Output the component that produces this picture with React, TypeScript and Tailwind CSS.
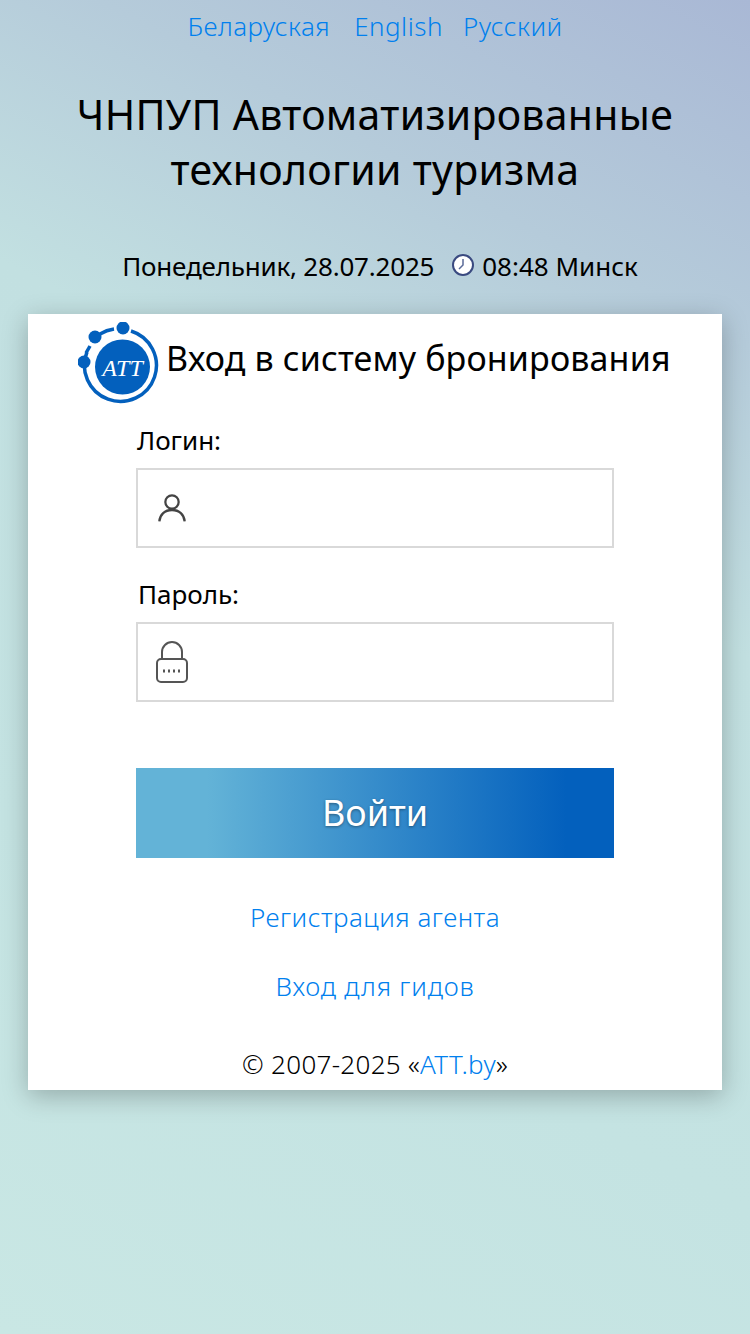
export default function App() {
  return (
    <div className="min-h-[1334px] bg-[linear-gradient(208deg,#a9b8d5_0%,#b5cbda_20%,#c2e0e1_38%,#c4e3e2_70%,#c9e7e4_100%)] font-['Noto_Sans',sans-serif]">
      <div className="flex flex-col items-center">
        <div className="flex h-[52px] items-center text-[26px] text-[#0080ee] font-light tracking-[0.5px]">
          <span>Беларуская</span>
          <span className="ml-[24px]">English</span>
          <span className="ml-[20px]">Русский</span>
        </div>
        <h1 className="mt-[35px] text-center text-[41px] leading-[55px] tracking-[0.3px] text-black">
          ЧНПУП Автоматизированные<br />технологии туризма
        </h1>
        <div className="mt-[49px] pl-[10px] flex items-center text-[26px] text-black h-[40px]">
          <span className="tracking-[-0.2px]">Понедельник, 28.07.2025</span>
          <svg className="ml-[17px] mr-[7px]" width="24" height="24" viewBox="0 0 24 24">
            <circle cx="12" cy="11" r="10" fill="#fff" stroke="#3a4a80" strokeWidth="2" />
            <path d="M12 5v6l-4 4" fill="none" stroke="#5a6a98" strokeWidth="1.500" />
          </svg>
          <span>08:48 Минск</span>
        </div>
        <div className="mt-[28px] w-[694px] h-[776px] bg-white shadow-[0_6px_24px_rgba(0,0,0,0.25)] flex flex-col items-center">
          <div className="flex items-center h-[89px] w-full pl-[50px]">
            <svg width="84" height="84" viewBox="0 0 84 84" className="mt-[11px]">
              <path d="M9 30a36 36 0 1 0 44-21" fill="none" stroke="#0360bd" strokeWidth="3.500" />
              <path d="M22 12a36 36 0 0 1 14-5" fill="none" stroke="#0360bd" strokeWidth="3.500" />
              <path d="M8 31l4-7" fill="none" stroke="#0360bd" strokeWidth="3.500" />
              <circle cx="44.500" cy="45" r="27.500" fill="#0360bd" />
              <circle cx="45" cy="6" r="6.500" fill="#0360bd" />
              <circle cx="17" cy="15" r="6.500" fill="#0360bd" />
              <circle cx="6" cy="40" r="6.500" fill="#0360bd" />
              <text x="44.500" y="54" textAnchor="middle" fontSize="24" fontStyle="italic" fontFamily="Liberation Serif" fill="#fff">ATT</text>
            </svg>
            <span className="ml-[4px] text-[34px] tracking-[0.15px] text-black">Вход в систему бронирования</span>
          </div>
          <div className="w-[478px] mt-[16px]">
            <div className="pt-[2px] pl-[1px] h-[40px] text-[26px] text-black">Логин:</div>
            <div className="mt-[9px] h-[80px] border-2 border-[#d9d9d9] flex items-center pl-[18px]">
              <svg width="32" height="32" viewBox="0 0 24 24" fill="none" stroke="#444" strokeWidth="1.700">
                <circle cx="12" cy="7.500" r="5" />
                <path d="M2.500 22c.5-5 4-8.500 9.500-8.500s9 3.500 9.500 8.500" />
              </svg>
            </div>
            <div className="mt-[26px] pt-[1px] h-[40px] pl-[2px] text-[26px] text-black">Пароль:</div>
            <div className="mt-[8px] h-[80px] border-2 border-[#d9d9d9] flex items-center pl-[16px]">
              <svg width="36" height="44" viewBox="0 0 36 44" fill="none" stroke="#555" strokeWidth="2">
                <rect x="3" y="19" width="30" height="23" rx="4" />
                <path d="M8 19V12a10 10 0 0 1 20 0v7" />
                <path d="M9 31h17" strokeDasharray="2 3" strokeWidth="3" />
              </svg>
            </div>
            <button className="mt-[66px] w-full h-[90px] text-white text-[36px] [text-shadow:0_1px_3px_rgba(0,0,0,0.4)] bg-[linear-gradient(90deg,#63b3d7_15%,#0360bd_90%)]">Войти</button>
          </div>
          <div className="mt-[40px] text-[26px] font-light tracking-[0.5px] text-[#0080ee]">Регистрация агента</div>
          <div className="mt-[30px] text-[26px] font-light tracking-[0.8px] text-[#0080ee]">Вход для гидов</div>
          <div className="mt-[39px] text-[26px] font-light tracking-[0.3px] text-black">© 2007-2025 «<span className="text-[#0080ee]">ATT.by</span>»</div>
        </div>
      </div>
    </div>
  );
}
